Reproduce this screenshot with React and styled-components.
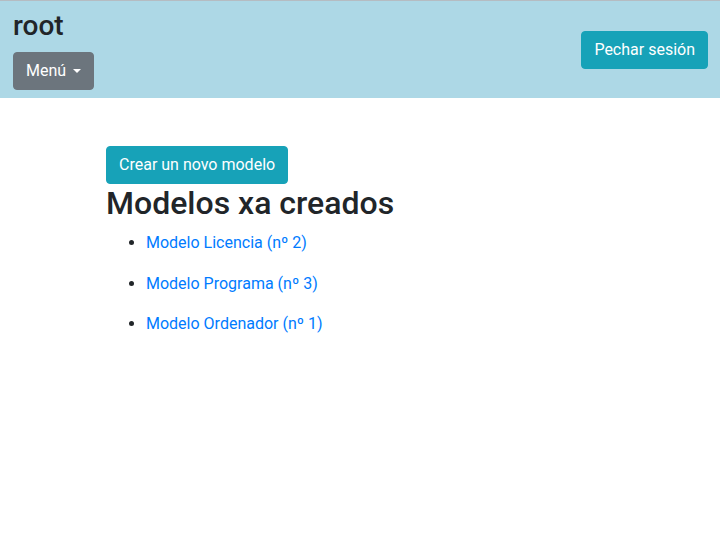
import React from "react"
import styled, { createGlobalStyle } from "styled-components"

const GlobalStyle = createGlobalStyle`
  body {
    margin: 0;
    font-family: Roboto, "Liberation Sans", sans-serif;
    font-size: 16px;
    line-height: 1.5;
    color: #212529;
    background: #fff;
  }
`

const Header = styled.header`
  display: flex;
  align-items: center;
  justify-content: space-between;
  background: #add8e6;
  border-top: 1px solid #b5bcc2;
  padding: 8px 12px 8px 13px;
`

const Brand = styled.div`
  display: flex;
  flex-direction: column;
  align-items: flex-start;
`

const Title = styled.h3`
  margin: 0 0 9.4px;
  font-size: 28px;
  font-weight: 500;
  line-height: 1.2;
`

const Button = styled.button`
  display: inline-flex;
  align-items: center;
  height: 38px;
  margin-top: ${p => p.$shift || 0}px;
  padding: 0 12px;
  border: 1px solid ${p => p.$bg};
  border-radius: 4px;
  background: ${p => p.$bg};
  color: #fff;
  font-family: inherit;
  font-size: 16px;
  line-height: 1.5;
  cursor: pointer;
`

const Caret = styled.span`
  display: inline-block;
  width: 0;
  height: 0;
  margin-left: 7px;
  border-top: 4.8px solid #fff;
  border-left: 4.8px solid transparent;
  border-right: 4.8px solid transparent;
`

const Main = styled.main`
  width: 540px;
  margin: 0 auto;
  padding: 48px 15px 0 16px;
  box-sizing: border-box;
`

const Heading = styled.h2`
  margin: 0 0 9px;
  font-size: 32px;
  font-weight: 500;
  line-height: 1.2;
`

const List = styled.ul`
  margin: 0;
  padding-left: 40px;
`

const Item = styled.li`
  margin-bottom: 16.5px;

  a {
    color: #007bff;
    text-decoration: none;
  }
`

const modelos = [
  { nome: "Licencia", n: 2 },
  { nome: "Programa", n: 3 },
  { nome: "Ordenador", n: 1 },
]

export default function App() {
  return (
    <>
      <GlobalStyle />
      <Header>
        <Brand>
          <Title>root</Title>
          <Button $bg="#6c757d">
            Menú<Caret />
          </Button>
        </Brand>
        <Button $bg="#17a2b8" $shift={2}>Pechar sesión</Button>
      </Header>
      <Main>
        <Button $bg="#17a2b8">Crear un novo modelo</Button>
        <Heading>Modelos xa creados</Heading>
        <List>
          {modelos.map(m => (
            <Item key={m.nome}>
              <a href="#">Modelo {m.nome} (nº {m.n})</a>
            </Item>
          ))}
        </List>
      </Main>
    </>
  )
}
